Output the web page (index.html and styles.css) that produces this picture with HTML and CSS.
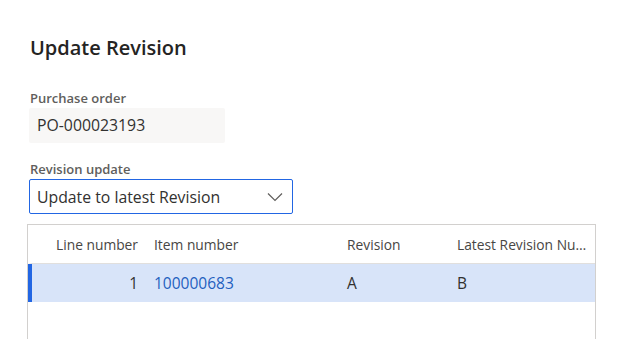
FILE: index.html
```html
<!DOCTYPE html>
<html lang="en">
<head>
  <meta charset="UTF-8" />
  <title>Update Revision</title>
  <link rel="stylesheet" href="styles.css">
</head>
<body>
  <main class="dialog">
    <h1>Update Revision</h1>

    <div class="field">
      <label>Purchase order</label>
      <div class="readonly">PO-000023193</div>
    </div>

    <div class="field">
      <label>Revision update</label>
      <div class="select">
        <span>Update to latest Revision</span>
        <svg width="16" height="10" viewBox="0 0 16 10">
          <path d="M1 1.5 L8 8.5 L15 1.5" fill="none" stroke="#605e5c" stroke-width="1.2" />
        </svg>
      </div>
    </div>

    <div class="grid">
      <div class="row head">
        <div class="cell num">Line number</div>
        <div class="cell">Item number</div>
        <div class="cell">Revision</div>
        <div class="cell">Latest Revision Number</div>
      </div>
      <div class="row selected">
        <div class="cell num">1</div>
        <div class="cell link">100000683</div>
        <div class="cell">A</div>
        <div class="cell">B</div>
      </div>
    </div>
  </main>
</body>
</html>
```

FILE: styles.css
```css
body {
  font-family: 'Segoe UI', 'Open Sans', sans-serif;
  background-color: #fff;
  color: #323130;
  margin: 0;
  padding: 0;
}

.dialog {
  padding: 30px 34px 0 29px;
}

h1 {
  margin: 0 0 0 1px;
  font-size: 20px;
  font-weight: 600;
  line-height: 36px;
  color: #252423;
}

.field {
  margin-top: 22px;
}

.field + .field {
  margin-top: 16px;
}

label {
  display: block;
  font-size: 13px;
  font-weight: 600;
  color: #605e5c;
  line-height: 20px;
  margin-left: 1px;
}

.readonly {
  width: 196px;
  height: 35px;
  box-sizing: border-box;
  background-color: #f8f7f6;
  border-radius: 2px;
  padding: 0 8px;
  font-size: 15.8px;
  line-height: 35px;
}

.select {
  width: 264px;
  height: 35px;
  box-sizing: border-box;
  border: 1px solid #2266e3;
  border-radius: 2px;
  padding: 0 7px;
  display: flex;
  align-items: center;
  justify-content: space-between;
  font-size: 15.8px;
}

.select svg {
  margin-right: 2px;
}

.grid {
  margin: 10px 0 0 -2px;
  width: 569px;
  height: 130px;
  box-sizing: border-box;
  border: 1px solid #d2d0ce;
}

.row {
  display: grid;
  grid-template-columns: 114px 193px 110px 1fr;
  border-left: 4px solid transparent;
  height: 38px;
  align-items: center;
}

.row.head {
  border-bottom: 1px solid #e1dfdd;
  font-size: 13.8px;
  color: #484644;
}

.row.selected {
  background-color: #d8e4f9;
  border-left-color: #2266e3;
  font-size: 15.5px;
}

.cell {
  padding: 0 8px;
  white-space: nowrap;
  overflow: hidden;
  text-overflow: ellipsis;
}

.cell.num {
  text-align: right;
}

.link {
  color: #1f5fbf;
}
```
